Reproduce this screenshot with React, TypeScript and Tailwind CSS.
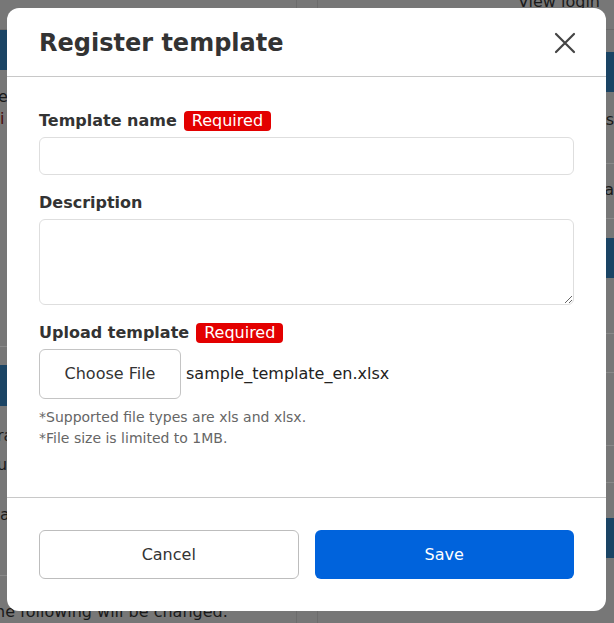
import React from 'react';

const font = { fontFamily: '"DejaVu Sans", Verdana, sans-serif' };

// dimmed page that sits behind the dialog
const Backdrop = () => (
  <div className="flex h-full w-full bg-[#777] text-[16px] leading-[22px] text-[#1a1a1a]">
    <div className="w-[296px] shrink-0">
      <div className="h-[30px] border-b border-[#6a6a6a]" />
      <div className="h-[40px] bg-[#1b4464]" />
      <div className="mt-[16px]">
        <p className="-ml-[2px]">e</p>
        <p className="text-[#4a0b0b]">i</p>
      </div>
      <div className="mt-[216px] h-px bg-[#8a8a8a]" />
      <div className="mt-[18px] h-[41px] bg-[#1b4464]" />
      <div className="mt-[19px]">
        <p className="-ml-[3px]">ra</p>
        <p className="-ml-[3px] mt-[7px]">ui</p>
        <p className="mt-[28px]">a</p>
      </div>
      <div className="mt-[49px] h-px bg-[#8a8a8a]" />
      <p className="mt-[25px] -ml-[5px] whitespace-nowrap">he following will be changed.</p>
    </div>
    <div className="w-[22px] shrink-0 border-x border-[#6c6c6c]" />
    <div className="flex-1">
      <div className="h-[30px] border-b border-[#6a6a6a] pr-[14px] text-right leading-[10px]">
        <span className="relative -top-[3px]">View login</span>
      </div>
      <div className="mt-[22px] h-[40px] bg-[#1b4464]" />
      <p className="mt-[17px] text-right">us</p>
      <div className="mt-[32px] h-px bg-[#8a8a8a]" />
      <p className="mt-[15px] text-right">ra</p>
      <div className="mt-[17px] h-px bg-[#8a8a8a]" />
      <div className="mt-[19px] h-[40px] bg-[#1b4464]" />
      <div className="mt-[55px] h-px bg-[#8a8a8a]" />
      <div className="mt-[38px] h-px bg-[#8a8a8a]" />
      <div className="mt-[72px] h-px bg-[#8a8a8a]" />
      <div className="mt-[36px] h-px bg-[#8a8a8a]" />
      <div className="mt-[35px] h-[40px] bg-[#1b4464]" />
    </div>
  </div>
);

const Badge = () => (
  <span className="inline-flex h-[20px] items-center rounded-[4px] bg-[#e30000] px-[8px] text-[16px] font-normal leading-none text-white">
    Required
  </span>
);

const App = () => {
  return (
    <div className="relative h-[623px] w-[614px] overflow-hidden" style={font}>
      <Backdrop />

      <div
        role="dialog"
        className="absolute left-[7px] top-[8px] flex h-[603px] w-[599px] flex-col rounded-[12px] bg-white text-[#333]"
      >
        <div className="flex h-[69px] shrink-0 items-center justify-between border-b border-[#c8c8c8] pl-[32px] pr-[30px] pt-[1px]">
          <h2 className="text-[24px] font-bold leading-none">Register template</h2>
          <button type="button" aria-label="close" className="flex h-[22px] w-[22px] items-center justify-center">
            <svg width="22" height="22" viewBox="0 0 22 22" fill="none" stroke="#444" strokeWidth="2.2" strokeLinecap="round">
              <path d="M2 2L20 20M20 2L2 20" />
            </svg>
          </button>
        </div>

        <div className="flex-1 border-b border-[#c8c8c8] px-[32px] pt-[32px]">
          <label className="block">
            <div className="flex h-[24px] items-center gap-[7px] text-[16px] font-bold">
              Template name <Badge />
            </div>
            <input
              type="text"
              className="mt-[4px] block h-[38px] w-full rounded-[6px] border border-[#dedede] px-3 outline-none"
            />
          </label>

          <label className="mt-[16px] block">
            <div className="flex h-[24px] items-center text-[16px] font-bold">Description</div>
            <textarea className="mt-[4px] block h-[86px] w-full resize-y rounded-[6px] border border-[#dedede] px-3 py-2 outline-none" />
          </label>

          <div className="mt-[16px]">
            <div className="flex h-[24px] items-center gap-[7px] text-[16px] font-bold">
              Upload template <Badge />
            </div>
            <div className="mt-[4px] flex items-center gap-[5px]">
              <button
                type="button"
                className="h-[50px] w-[142px] rounded-[6px] border border-[#c4c4c4] bg-white text-[16px] text-[#333]"
              >
                Choose File
              </button>
              <span className="text-[16px] text-[#222]">sample_template_en.xlsx</span>
            </div>
            <div className="mt-[8px] text-[14px] leading-[21px] text-[#666]">
              <p>*Supported file types are xls and xlsx.</p>
              <p>*File size is limited to 1MB.</p>
            </div>
          </div>
        </div>

        <div className="grid shrink-0 grid-cols-2 gap-[16px] px-[32px] py-[32px]">
          <button type="button" className="h-[49px] rounded-[6px] border border-[#bdbdbd] bg-white text-[16px] text-[#333]">
            Cancel
          </button>
          <button type="button" className="h-[49px] rounded-[6px] bg-[#0063dc] text-[16px] text-white">
            Save
          </button>
        </div>
      </div>
    </div>
  );
};

export default App;
